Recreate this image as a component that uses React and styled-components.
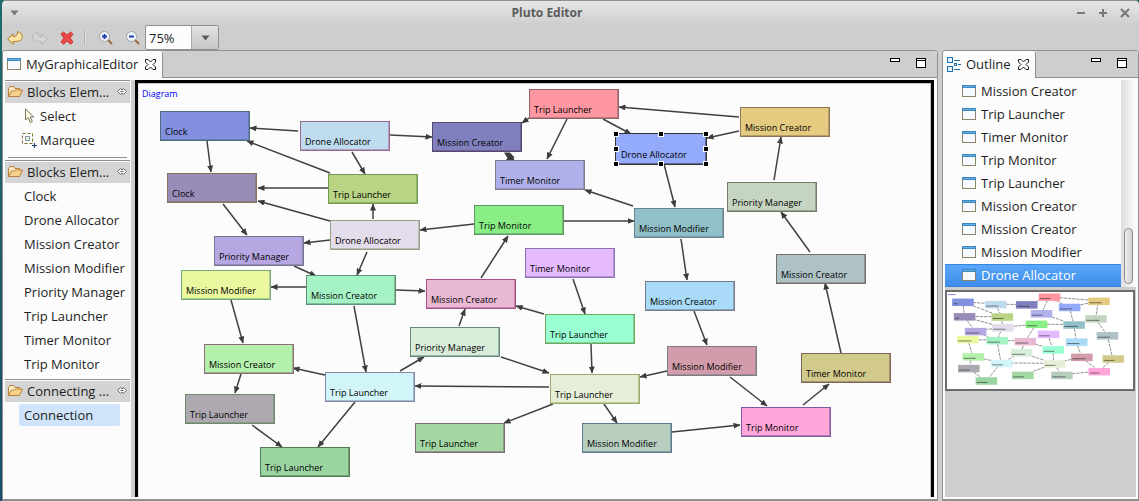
import React from "react";
import styled, { createGlobalStyle, css } from "styled-components";

const INK = "#1e1e1e";
const CHROME = "#cecece";
const LINE = "#909090";
const PAPER = "#fcfcfc";

const GlobalStyle = createGlobalStyle`
  * { box-sizing: border-box; }
  body {
    margin: 0;
    background: linear-gradient(#1f6a68, #1b4f6b);
    font-family: "Open Sans", "Noto Sans", sans-serif;
    font-size: 13px;
    line-height: 18px;
    color: ${INK};
  }
  button, select { font: inherit; color: inherit; }
  button { border: 0; padding: 0; background: none; text-align: left; }
  ul { list-style: none; margin: 0; padding: 0; }
  svg { display: block; flex: none; }
`;

const Window = styled.div`
  display: flex;
  flex-direction: column;
  min-height: 100vh;
  margin-left: 2px;
  background: ${CHROME};
  border-radius: 5px 5px 0 0;
  overflow: hidden;
`;

const TitleBar = styled.header`
  display: flex;
  align-items: center;
  height: 25px;
  padding: 0 8px;
  border-top: 1px solid ${LINE};
  background: linear-gradient(#e6e6e6, ${CHROME});
`;

const Title = styled.h1`
  flex: 1;
  margin: 0;
  font-size: 12px;
  line-height: 18px;
  font-weight: 700;
  color: #5b5b5b;
  text-align: center;
`;

const WindowButtons = styled.div`
  display: flex;
  gap: 10px;
`;

const Toolbar = styled.div`
  display: flex;
  align-items: center;
  height: 25px;
  padding-left: 4px;
`;

const ToolButton = styled.button`
  display: grid;
  place-items: center;
  width: ${(p) => p.$width || 26}px;
  height: 24px;
`;

const ToolDivider = styled.span`
  width: 1px;
  height: 15px;
  margin: 0 6px;
  background: #b4b4b4;
  box-shadow: 1px 0 #dedede;
`;

const Combo = styled.label`
  display: grid;
  grid-template-columns: 1fr 27px;
  width: 74px;
  height: 25px;
  border: 1px solid ${LINE};
  border-radius: 2px;
  background: ${PAPER};
  overflow: hidden;
`;

const ComboSelect = styled.select`
  grid-area: 1 / 1 / 2 / 3;
  appearance: none;
  border: 0;
  padding: 0 3px;
  background: transparent;
`;

const ComboArrow = styled.span`
  grid-area: 1 / 2;
  display: grid;
  place-items: center;
  border-left: 1px solid #a8a8a8;
  background: linear-gradient(#e2e2e2, #c6c6c6);
  pointer-events: none;
`;

const Workbench = styled.main`
  flex: 1;
  display: flex;
  gap: 4px;
`;

const Panel = styled.section`
  display: flex;
  flex-direction: column;
  min-width: 0;
  flex: ${(p) => (p.$width ? `0 0 ${p.$width}px` : "1")};
  border: 1px solid ${LINE};
  border-bottom-width: 2px;
  border-radius: 4px 4px 0 0;
  background: ${PAPER};
  overflow: hidden;
`;

const TabStrip = styled.div`
  display: flex;
  height: 27px;
  background: ${PAPER};
`;

const Tab = styled.div`
  display: flex;
  align-items: center;
  gap: 7px;
  padding: 0 6px 1px 4px;
  border-right: 1px solid ${LINE};
  border-radius: 0 3px 0 0;
`;

const TabLabel = styled.button`
  display: flex;
  align-items: center;
  gap: 5px;
  white-space: nowrap;
`;

const StripRest = styled.div`
  flex: 1;
  display: flex;
  align-items: flex-start;
  justify-content: flex-end;
  gap: 16px;
  padding: 7px 11px 0 0;
  border-bottom: 1px solid ${LINE};
  background: ${CHROME};
`;

const PanelBody = styled.div`
  flex: 1;
  display: flex;
  flex-direction: ${(p) => (p.$column ? "column" : "row")};
  padding: 2px;
`;

const Palette = styled.nav`
  flex: 0 0 126px;
  padding-right: 1px;
`;

const DrawerHeader = styled.button`
  display: flex;
  align-items: center;
  gap: 4px;
  width: 100%;
  height: 23px;
  padding: 0 3px 1px;
  border-top: 1px solid ${LINE};
  box-shadow: inset 0 1px ${PAPER};
  background: #d4d4d4;
`;

const DrawerTitle = styled.span`
  flex: 1;
  white-space: nowrap;
`;

const DrawerItems = styled.ul`
  display: grid;
  gap: 2px;
  padding: 2px 0 4px 14px;
`;

const DrawerRule = styled.hr`
  height: 1px;
  margin: 2px 3px;
  border: 0;
  background: ${LINE};
`;

const PaletteItem = styled.button`
  display: flex;
  align-items: center;
  gap: 3px;
  width: 101px;
  height: 22px;
  padding-left: ${(p) => (p.$icon ? 0 : 5)}px;
  border-radius: 2px;
  white-space: nowrap;
  background: ${(p) => (p.$active ? "#cfe3fb" : "transparent")};
`;

const Splitter = styled.div`
  flex: 0 0 4px;
  background: ${CHROME};
`;

const CanvasFrame = styled.div`
  flex: 1;
  min-width: 0;
  margin-right: 1px;
  border: 3px solid #000;
  border-bottom: 0;
`;

const Canvas = styled.div`
  position: relative;
  height: 100%;
  min-height: 414px;
  overflow: hidden;
  background: ${PAPER};
  box-shadow: inset 0 1px #c4c4c4, inset 1px 0 #e4e4e4, inset -1px 0 #c4c4c4;
`;

const CanvasLabel = styled.div`
  padding: 4px 0 0 4px;
  font-size: 9px;
  line-height: 13px;
  color: #0000ff;
`;

const Links = styled.svg`
  position: absolute;
  inset: 0;
`;

const Node = styled.div`
  position: absolute;
  left: ${(p) => p.$x}px;
  top: ${(p) => p.$y}px;
  width: 90px;
  height: 30px;
  padding: 13px 0 0 4px;
  border: 1px solid ${(p) => p.$edge};
  box-shadow: inset -1px -1px ${(p) => p.$edge}88;
  background: ${(p) => p.$fill};
  font-size: 9px;
  line-height: 13px;
  color: #000;
  white-space: nowrap;
  ${(p) =>
    p.$selected &&
    css`
      width: 92px;
      height: 32px;
      padding: 14px 0 0 5px;
      border-color: #33333c;
    `}
`;

const Handle = styled.i`
  position: absolute;
  left: ${(p) => p.$left};
  top: ${(p) => p.$top};
  width: 6px;
  height: 6px;
  margin: -3px;
  border: 1px solid #fff;
  background: #000;
`;

const OutlineList = styled.div`
  display: flex;
  margin-right: 1px;
`;

const OutlineItems = styled.ul`
  flex: 1;
`;

const OutlineItem = styled.button`
  display: flex;
  align-items: center;
  gap: 5px;
  width: 100%;
  height: 23px;
  padding: 0 0 1px 17px;
  ${(p) =>
    p.$selected &&
    css`
      color: #fff;
      box-shadow: inset 0 1px #3a86dc, inset 0 -1px #3a86dc;
      background: linear-gradient(#5aa8fb, #3c8ce9);
    `}
`;

const ScrollTrack = styled.div`
  display: flex;
  align-items: flex-end;
  justify-content: center;
  width: 14px;
  padding-bottom: 3px;
  background: linear-gradient(90deg, #dedede, #fafafa);
`;

const ScrollThumb = styled.div`
  width: 9px;
  height: 56px;
  border: 1px solid #8c8c8c;
  border-radius: 5px;
  background: linear-gradient(90deg, #f0f0f0, #cfcfcf);
`;

const Overview = styled.div`
  flex: 1;
  padding-top: 3px;
  background: ${CHROME};
`;

const OverviewMap = styled.svg`
  width: 190px;
  height: 101px;
  border: 2px solid #6c6c6c;
  background: #fff;
`;

const nodes = [
  ["Clock", 160, 111, "#8390df", "#4b6f80"],
  ["Drone Allocator", 300, 121, "#bfdcee", "#9a6a90"],
  ["Clock", 167, 173, "#998cb8", "#86745c"],
  ["Trip Launcher", 328, 174, "#b9d484", "#6f9a50"],
  ["Drone Allocator", 330, 220, "#e3dceb", "#93a184"],
  ["Priority Manager", 214, 236, "#b6a6e1", "#74778f"],
  ["Mission Modifier", 181, 270, "#ebf8a0", "#78a87c"],
  ["Mission Creator", 306, 275, "#a5f3c5", "#5f8f74"],
  ["Mission Creator", 432, 122, "#8080bf", "#54486f"],
  ["Trip Launcher", 529, 89, "#fe97a2", "#8f6468"],
  ["Timer Monitor", 495, 160, "#b0b1eb", "#7c7e90"],
  ["Trip Monitor", 474, 205, "#8aee87", "#5f9866"],
  ["Drone Allocator", 615, 133, "#93abfa", "#33333c", true],
  ["Mission Modifier", 634, 208, "#92c0c8", "#6a8590"],
  ["Timer Monitor", 525, 248, "#e5baff", "#8a72b0"],
  ["Mission Creator", 426, 279, "#e9b8d2", "#a84f86"],
  ["Mission Creator", 740, 107, "#e4cb80", "#8c7656"],
  ["Priority Manager", 727, 182, "#c6d5c1", "#747a68"],
  ["Mission Creator", 776, 254, "#aec1c5", "#74706c"],
  ["Mission Creator", 204, 344, "#b3f0ab", "#8f7078"],
  ["Trip Launcher", 185, 394, "#aea9b1", "#6d8a6c"],
  ["Trip Launcher", 260, 447, "#9ad4a0", "#4f7a52"],
  ["Trip Launcher", 325, 372, "#d2f5f9", "#8088a4"],
  ["Priority Manager", 410, 327, "#d9eeda", "#64887c"],
  ["Trip Launcher", 545, 314, "#9affd3", "#6fa860"],
  ["Trip Launcher", 550, 374, "#e6eed7", "#98ab68"],
  ["Trip Launcher", 415, 423, "#a3d6a2", "#7d6a78"],
  ["Mission Modifier", 582, 423, "#b7cebf", "#5c7a90"],
  ["Mission Creator", 645, 281, "#a9daf7", "#747c8c"],
  ["Mission Modifier", 667, 346, "#d29caa", "#7c7c84"],
  ["Timer Monitor", 801, 353, "#d2ca8b", "#7c6656"],
  ["Trip Monitor", 741, 407, "#ffa5d9", "#7c5ca0"],
].map(([label, x, y, fill, edge, selected]) => ({
  label, x: x - 138, y: y - 83, fill, edge, selected,
}));

const links = [
  [298, 131, 250, 128], [207, 141, 211, 172], [330, 173, 247, 141],
  [390, 135, 432, 137], [352, 152, 365, 174], [328, 188, 258, 188],
  [373, 219, 373, 204], [330, 221, 258, 201], [223, 204, 247, 235],
  [330, 240, 304, 243], [294, 266, 316, 276], [367, 252, 357, 275],
  [306, 287, 271, 287], [474, 224, 420, 230], [529, 118, 522, 123],
  [567, 119, 547, 159],
  [603, 119, 631, 134], [633, 206, 585, 190], [564, 221, 634, 221],
  [481, 278, 508, 236], [573, 279, 585, 314], [739, 117, 619, 107],
  [739, 131, 707, 138], [664, 164, 675, 207], [774, 180, 781, 137],
  [810, 252, 781, 212], [681, 239, 687, 280], [231, 300, 243, 343],
  [354, 306, 366, 372], [396, 290, 425, 291], [325, 375, 293, 368],
  [241, 374, 235, 393], [252, 425, 282, 447], [355, 402, 318, 447],
  [400, 371, 424, 357], [459, 326, 465, 309], [544, 314, 516, 306],
  [501, 357, 549, 373], [591, 344, 592, 373], [549, 387, 415, 386],
  [667, 371, 640, 377], [553, 404, 504, 423], [604, 404, 617, 423],
  [672, 432, 740, 425], [694, 311, 707, 345], [730, 377, 767, 406],
  [803, 405, 829, 384], [841, 353, 825, 283],
].map(([x1, y1, x2, y2]) => ({ x1: x1 - 138, y1: y1 - 83, x2: x2 - 138, y2: y2 - 83 }));

const handles = ["0%", "50%", "100%"].flatMap((left) =>
  ["0%", "50%", "100%"].map((top) => [left, top])
).filter(([l, t]) => !(l === "50%" && t === "50%"));

const outline = [
  "Mission Creator", "Trip Launcher", "Timer Monitor", "Trip Monitor", "Trip Launcher",
  "Mission Creator", "Mission Creator", "Mission Modifier", "Drone Allocator",
];

const blocks = [
  "Clock", "Drone Allocator", "Mission Creator", "Mission Modifier",
  "Priority Manager", "Trip Launcher", "Timer Monitor", "Trip Monitor",
];

const FormIcon = () => (
  <svg width="14" height="12" viewBox="0 0 14 12">
    <rect x=".5" y=".5" width="13" height="11" fill="#f4faff" stroke="#8f8466" />
    <path d="M0 0h14v3H0z" fill="#3f86bd" />
    <path d="M1 1h12v1H1z" fill="#62b0e6" />
  </svg>
);

const OutlineIcon = () => (
  <svg width="14" height="15" viewBox="0 0 14 15" fill="#e3f1fb" stroke="#1d6fae">
    <rect x=".5" y=".5" width="5" height="5" />
    <rect x=".5" y="9.500" width="5" height="5" />
    <path d="M7 3.500h6M7 12.500h6M11 7.500h3" fill="none" />
    <rect x="7.500" y="6.500" width="2" height="2" />
  </svg>
);

const CloseIcon = () => (
  <svg width="11" height="11" viewBox="0 0 11 11" fill="#fff" stroke="#1a1a1a">
    <path d="M.5.5h2.500l2.500 2.500L8 .5h2.500V3L8 5.500l2.500 2.500v2.500H8L5.500 8 3 10.500H.5V8L3 5.500.5 3z" />
  </svg>
);

const MinIcon = () => (
  <svg width="10" height="4" viewBox="0 0 10 4">
    <rect x=".5" y=".5" width="9" height="3" fill="#fff" stroke="#000" />
  </svg>
);

const MaxIcon = () => (
  <svg width="10" height="10" viewBox="0 0 10 10">
    <rect x=".5" y=".5" width="9" height="9" fill="#fff" stroke="#000" />
    <path d="M1 2.500h8" stroke="#000" />
  </svg>
);

const FolderIcon = () => (
  <svg width="15" height="11" viewBox="0 0 15 11" stroke="#b9803a" strokeLinejoin="round">
    <path d="M.5 10.500v-8L2 .5h3.500L7 2.500h4.500v3" fill="#fbe9c0" />
    <path d="M.5 10.500l3-5.500h3l1-1h7l-3 6.500z" fill="#f6d28c" />
  </svg>
);

const PinIcon = () => (
  <svg width="10" height="7" viewBox="0 0 10 7" fill="#fff" stroke="#555" strokeWidth=".9">
    <path d="M.6 3.500L3.500.6 5 2 6.500.6l2.900 2.900-2.900 2.900L5 5 3.500 6.400z" />
    <path d="M3.500 3.500h3" />
  </svg>
);

const CursorIcon = () => (
  <svg width="18" height="16" viewBox="0 0 18 16">
    <path d="M6.500 1v11l2.500-2.500 2.300 5 2-1-2.200-4.500h3.600z" fill="#fffbe6" stroke="#77705c" />
  </svg>
);

const MarqueeIcon = () => (
  <svg width="18" height="16" viewBox="0 0 18 16" fill="none">
    <rect x="3.500" y="1.500" width="10" height="10" stroke="#7c6a2c" strokeDasharray="3 2" />
    <rect x="6.500" y="4.500" width="4" height="4" fill="#e4efe4" stroke="#8a9a9a" />
    <path d="M15.500 11v5M13 13.500h5" stroke="#1c3c7a" />
  </svg>
);

const UndoIcon = ({ flip }) => (
  <svg width="16" height="14" viewBox="0 0 16 14" strokeLinejoin="round">
    <path
      transform={flip ? "translate(16 0) scale(-1 1)" : undefined}
      d="M.7 8L6.200 2.800v2.800c2.800.2 4.700-1.400 4.300-5 3.400 1 5.200 3.200 4.700 5.900-.5 2.800-3.500 4.200-9 4v2.800z"
      fill={flip ? "#d6d6d6" : "#fce3a6"}
      stroke={flip ? "#b4b4b4" : "#b07a1e"}
    />
  </svg>
);

const DeleteIcon = () => (
  <svg width="14" height="14" viewBox="0 0 14 14" strokeLinejoin="round">
    <path d="M1 3l2.500-2L7 4l3.500-3L13 3l-3 4 3 4-2.500 2.200L7 10l-3.500 3.200L1 11l3-4z" fill="#ea4a4a" stroke="#cf3434" />
  </svg>
);

const ZoomIcon = ({ plus }) => (
  <svg width="14" height="14" viewBox="0 0 14 14">
    <path d="M9 9l4 4" stroke="#9a6a40" strokeWidth="2" />
    <circle cx="5.500" cy="5.500" r="5" fill="#eef3fc" stroke="#a0a29c" />
    <path d={plus ? "M3 5.500h5M5.500 3v5" : "M3 5.500h5"} stroke="#1d3fa8" strokeWidth="1.800" />
  </svg>
);

const DownIcon = ({ color = "#5a5a5a" }) => (
  <svg width="9" height="6" viewBox="0 0 9 6">
    <path d="M.5.500h8L4.500 5.500z" fill={color} />
  </svg>
);

const TitleGlyph = ({ d }) => (
  <svg width="12" height="12" viewBox="0 0 12 12">
    <path d={d} stroke="#777" strokeWidth="2" fill="none" />
  </svg>
);

const PanelButtons = () => (
  <>
    <button aria-label="Minimize view"><MinIcon /></button>
    <button aria-label="Maximize view"><MaxIcon /></button>
  </>
);

function Drawer({ title, children }) {
  return (
    <>
      <DrawerHeader>
        <FolderIcon />
        <DrawerTitle>{title}</DrawerTitle>
        <PinIcon />
      </DrawerHeader>
      <DrawerItems>{children}</DrawerItems>
    </>
  );
}

function Diagram() {
  return (
    <Canvas>
      <CanvasLabel>Diagram</CanvasLabel>
      <Links width="100%" height="100%" aria-hidden="true">
        <defs>
          <marker id="arrow" viewBox="0 0 7 6" refX="6.500" refY="3" markerWidth="7" markerHeight="6" markerUnits="userSpaceOnUse" orient="auto">
            <path d="M0 0l7 3-7 3z" fill="#3c3c3c" />
          </marker>
        </defs>
        {links.map((l, i) => (
          <line key={i} {...l} stroke="#404040" strokeWidth="1.500" markerEnd="url(#arrow)" />
        ))}
        {/* the pair of heads that overlap in the narrow gap between two nodes */}
        <path d="M366 69.500h6l4.500 5-1 1 1 1.500h-8.500l1.500-2z" fill="#3c3c3c" />
      </Links>
      {nodes.map((n, i) => (
        <Node key={i} $x={n.x} $y={n.y} $fill={n.fill} $edge={n.edge} $selected={n.selected}>
          {n.label}
          {n.selected && handles.map(([l, t]) => <Handle key={l + t} $left={l} $top={t} />)}
        </Node>
      ))}
    </Canvas>
  );
}

function MiniMap() {
  return (
    <OverviewMap viewBox="0 0 793 414" preserveAspectRatio="none" aria-label="Diagram overview" role="img">
      <path d="M4 11h32" stroke="#7777ff" strokeWidth="4" />
      {links.map((l, i) => (
        <line key={i} {...l} stroke="#8a8a8a" strokeWidth="4" strokeDasharray="14 4" />
      ))}
      {nodes.map((n, i) => (
        <g key={i}>
          <rect x={n.x} y={n.y} width="92" height="32" fill={n.fill} />
          <path d={`M${n.x + 5} ${n.y + 22}h${n.label.length * 3.5}`} stroke="#222" strokeOpacity=".6" strokeWidth="4" />
        </g>
      ))}
    </OverviewMap>
  );
}

export default function App() {
  return (
    <>
      <GlobalStyle />
      <Window>
        <TitleBar>
          <button aria-label="Window menu"><DownIcon color="#777" /></button>
          <Title>Pluto Editor</Title>
          <WindowButtons>
            <button aria-label="Minimize"><TitleGlyph d="M2 6h8" /></button>
            <button aria-label="Maximize"><TitleGlyph d="M2 6h8M6 2v8" /></button>
            <button aria-label="Close"><TitleGlyph d="M2 2l8 8M10 2l-8 8" /></button>
          </WindowButtons>
        </TitleBar>
        <Toolbar>
          <ToolButton aria-label="Undo" $width={18}><UndoIcon /></ToolButton>
          <ToolButton aria-label="Redo" $width={32}><UndoIcon flip /></ToolButton>
          <ToolButton aria-label="Delete" $width={22}><DeleteIcon /></ToolButton>
          <ToolDivider />
          <ToolButton aria-label="Zoom in" $width={30}><ZoomIcon plus /></ToolButton>
          <ToolButton aria-label="Zoom out" $width={24}><ZoomIcon /></ToolButton>
          <Combo>
            <ComboSelect aria-label="Zoom level" defaultValue="75%">
              <option>50%</option>
              <option>75%</option>
              <option>100%</option>
            </ComboSelect>
            <ComboArrow><DownIcon /></ComboArrow>
          </Combo>
        </Toolbar>
        <Workbench>
          <Panel>
            <TabStrip>
              <Tab>
                <TabLabel><FormIcon />MyGraphicalEditor</TabLabel>
                <button aria-label="Close editor"><CloseIcon /></button>
              </Tab>
              <StripRest><PanelButtons /></StripRest>
            </TabStrip>
            <PanelBody>
              <Palette>
                <Drawer title="Blocks Elem...">
                  <li><PaletteItem $icon><CursorIcon />Select</PaletteItem></li>
                  <li><PaletteItem $icon><MarqueeIcon />Marquee</PaletteItem></li>
                </Drawer>
                <DrawerRule />
                <Drawer title="Blocks Elem...">
                  {blocks.map((b) => <li key={b}><PaletteItem>{b}</PaletteItem></li>)}
                </Drawer>
                <Drawer title="Connecting ...">
                  <li><PaletteItem $active>Connection</PaletteItem></li>
                </Drawer>
              </Palette>
              <Splitter />
              <CanvasFrame><Diagram /></CanvasFrame>
            </PanelBody>
          </Panel>
          <Panel $width={197}>
            <TabStrip>
              <Tab>
                <TabLabel><OutlineIcon />Outline</TabLabel>
                <button aria-label="Close outline"><CloseIcon /></button>
              </Tab>
              <StripRest><PanelButtons /></StripRest>
            </TabStrip>
            <PanelBody $column>
              <OutlineList>
                <OutlineItems>
                  {outline.map((label, i) => (
                    <li key={i}>
                      <OutlineItem $selected={i === outline.length - 1}><FormIcon />{label}</OutlineItem>
                    </li>
                  ))}
                </OutlineItems>
                <ScrollTrack><ScrollThumb /></ScrollTrack>
              </OutlineList>
              <Overview><MiniMap /></Overview>
            </PanelBody>
          </Panel>
        </Workbench>
      </Window>
    </>
  );
}
